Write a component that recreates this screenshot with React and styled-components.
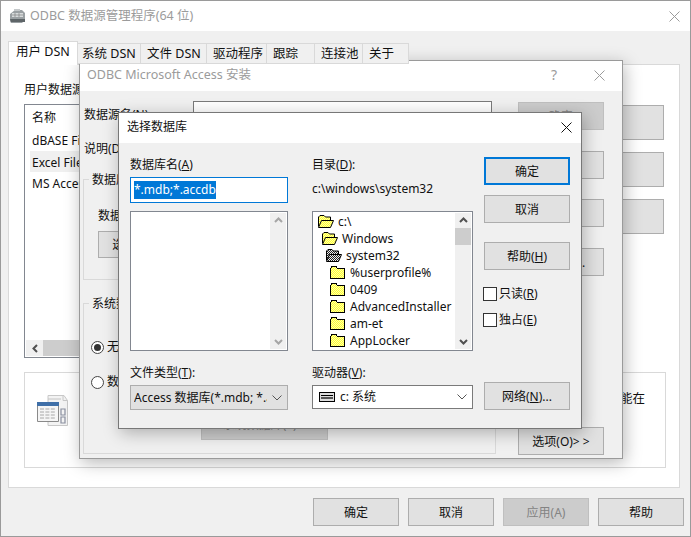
import React from "react";
import styled, { createGlobalStyle } from "styled-components";

const Global = createGlobalStyle`
  html, body { margin: 0; padding: 0; background: #fff; }
  body { font: 12px/16px "Noto Sans", "Noto Sans CJK SC", sans-serif; color: #111; overflow: hidden; }
  * { box-sizing: border-box; }
`;

const Desktop = styled.div`
  position: relative;
  width: 691px;
  height: 537px;
  overflow: hidden;
`;

const Win = styled.section`
  position: absolute;
  left: ${p => p.$x}px;
  top: ${p => p.$y}px;
  width: ${p => p.$w}px;
  height: ${p => p.$h}px;
  display: flex;
  flex-direction: column;
  background: #f0f0f0;
  border: 1px solid ${p => (p.$active ? "#777" : "#9a9a9a")};
  box-shadow: ${p => (p.$shadow ? "2px 4px 16px rgba(0,0,0,.28)" : "none")};
`;

const TitleBar = styled.header`
  flex: none;
  height: 30px;
  display: flex;
  align-items: center;
  gap: 4px;
  padding: 0 ${p => p.$pr || 16}px ${p => p.$pb || 0}px ${p => p.$pl}px;
  background: #fff;
  color: ${p => (p.$active ? "#111" : "#9b9b9b")};
  font-size: ${p => (p.$active ? 12 : 12.5)}px;
`;

const TitleText = styled.span`
  flex: 1;
  white-space: nowrap;
`;

const Help = styled.span`
  color: #9b9b9b;
  font-size: 14px;
  margin-right: 33px;
`;

const Close = ({ active }) => (
  <svg width="11" height="11" viewBox="0 0 11 11">
    <path d="M.5.5l10 10M10.5.5l-10 10" stroke={active ? "#111" : "#9b9b9b"} strokeWidth="1" fill="none" />
  </svg>
);

const U = styled.u`
  text-underline-offset: 1px;
`;

/* ---------- buttons ---------- */
const Btn = styled.button`
  flex: none;
  display: block;
  width: ${p => p.$w || 86}px;
  height: ${p => p.$h || 28}px;
  margin-top: ${p => p.$mt || 0}px;
  padding: 1px 0 0;
  font: inherit;
  white-space: nowrap;
  color: ${p => (p.$disabled ? "#838383" : "#111")};
  background: ${p => (p.$disabled ? "#cccccc" : "#e1e1e1")};
  border: ${p => (p.$focus ? "2px solid #0078d7" : p.$disabled ? "1px solid #bfbfbf" : "1px solid #adadad")};
`;

/* ---------- outer window ---------- */
const OuterBody = styled.div`
  flex: 1;
  display: flex;
  flex-direction: column;
  padding: 10px 6px 0 7px;
`;

const Tabs = styled.nav`
  display: flex;
  align-items: flex-end;
  height: 23px;
  position: relative;
  z-index: 1;
`;

const Tab = styled.div`
  width: ${p => p.$w}px;
  height: ${p => (p.$on ? 24 : 21)}px;
  margin-bottom: ${p => (p.$on ? -1 : 0)}px;
  padding-top: 2px;
  padding-left: ${p => p.$pl}px;
  font-size: 12.5px;
  background: ${p => (p.$on ? "#fff" : "#f0f0f0")};
  border: 1px solid #d9d9d9;
  border-bottom: ${p => (p.$on ? "none" : "1px solid #d9d9d9")};
  border-left: ${p => (p.$on ? "1px solid #d9d9d9" : "none")};
  white-space: nowrap;
`;

const Panel = styled.div`
  width: 672px;
  height: 424px;
  background: #fff;
  border: 1px solid #d9d9d9;
  padding: 17px 13px 0 15px;
`;

const PanelRow = styled.div`
  display: flex;
  justify-content: space-between;
  margin-top: 6px;
`;

const DsnList = styled.div`
  width: 470px;
  height: 254px;
  display: flex;
  flex-direction: column;
  border: 1px solid #828790;
  padding: 5px 1px 1px;
`;

const DsnHead = styled.div`
  height: 19px;
  padding-left: 6px;
`;

const DsnItem = styled.div`
  height: 21.5px;
  line-height: 23px;
  margin-left: 4px;
  padding-left: 2px;
  white-space: nowrap;
  background: ${p => (p.$sel ? "#f0f0f0" : "transparent")};
`;

const HScroll = styled.div`
  margin-top: auto;
  height: 16px;
  display: flex;
  align-items: center;
  background: #f0f0f0;
`;

const HArrow = styled.div`
  width: 17px;
  display: flex;
  justify-content: center;
`;

const HThumb = styled.div`
  width: 200px;
  height: 16px;
  background: #cdcdcd;
`;

const SideBtns = styled.div`
  display: flex;
  flex-direction: column;
  gap: 12px;
  padding: 1px 2px 0 0;
`;

const InfoBox = styled.div`
  height: 96px;
  margin-top: 14px;
  border: 1px solid #d9d9d9;
  display: flex;
  align-items: flex-start;
  padding: 17px 0 0 12px;
`;

const IconSlot = styled.div`
  margin-top: 5px;
  display: flex;
`;

const InfoText = styled.div`
  margin-left: 12px;
  width: 565px;
  padding-top: 1px;
`;

const InfoLine = styled.div`
  text-align: ${p => p.$align || "left"};
  white-space: nowrap;
  font-size: 12.5px;
`;

const Footer = styled.footer`
  display: flex;
  justify-content: flex-end;
  gap: 9px;
  margin-top: 10px;
`;

/* ---------- middle window ---------- */
const MidBody = styled.div`
  flex: 1;
  min-height: 0;
  display: flex;
  justify-content: space-between;
  padding: 10px 18px 2px 3px;
`;

const MidForm = styled.div`
  width: 413px;
  display: flex;
  flex-direction: column;
`;

const FieldRow = styled.div`
  display: flex;
  align-items: flex-start;
  height: 34px;
  padding-left: 1px;
`;

const FieldLabel = styled.label`
  width: 109px;
  padding-top: 6px;
  white-space: nowrap;
`;

const FieldInput = styled.div`
  width: 299px;
  height: 26px;
  background: #fff;
  border: 1px solid #7a7a7a;
`;

const Fieldset = styled.fieldset`
  margin: ${p => p.$mt || 0}px 0 0;
  padding: ${p => p.$pt}px 12px 0 14px;
  height: ${p => p.$h}px;
  border: 1px solid #d9d9d9;
  min-width: 0;
`;

const Legend = styled.legend`
  margin-left: -9px;
  padding: 2px 3px 0;
`;

const SmallBtns = styled.div`
  display: flex;
  gap: 10px;
  margin-top: 7px;
`;

const RadioRow = styled.label`
  display: flex;
  align-items: center;
  gap: 3px;
  height: 16px;
  margin-top: ${p => p.$mt}px;
  margin-left: -7px;
`;

const Radio = styled.span`
  width: 13px;
  height: 13px;
  flex: none;
  display: flex;
  align-items: center;
  justify-content: center;
  border-radius: 50%;
  background: #fff;
  border: 1px solid #444;
  &::after {
    content: "";
    width: 7px;
    height: 7px;
    border-radius: 50%;
    background: ${p => (p.$on ? "#333" : "transparent")};
  }
`;

const CenterBtn = styled.div`
  display: flex;
  justify-content: flex-start;
  margin: ${p => p.$mt}px 0 0 103px;
`;

const MidBtns = styled.div`
  display: flex;
  flex-direction: column;
  padding-top: 1px;
`;

/* ---------- front dialog ---------- */
const DlgBody = styled.div`
  flex: 1;
  display: flex;
  padding: 14px 0 0 11px;
`;

const Col = styled.div`
  width: ${p => p.$w}px;
  margin-right: ${p => p.$mr || 0}px;
  display: flex;
  flex-direction: column;
`;

const Label = styled.div`
  height: 16px;
  flex: none;
  margin-top: ${p => p.$mt || 0}px;
  white-space: nowrap;
`;

const NameInput = styled.div`
  height: 26px;
  margin-top: 4px;
  border: 1px solid #0078d7;
  background: #fff;
  padding: 3px 0 0 3px;
`;

const Selected = styled.span`
  display: inline-block;
  height: 18px;
  line-height: 18px;
  background: #0078d7;
  color: #fff;
  white-space: nowrap;
`;

const ListBox = styled.div`
  height: 140px;
  margin-top: ${p => p.$mt}px;
  display: flex;
  background: #fff;
  border: 1px solid #828790;
  padding: 1px;
`;

const ListMain = styled.div`
  flex: 1;
  min-width: 0;
  overflow: hidden;
`;

const VScroll = styled.div`
  flex: none;
  width: 16px;
  display: flex;
  flex-direction: column;
  align-items: center;
  background: #f0f0f0;
  padding: 4px 0;
`;

const VThumb = styled.div`
  width: 16px;
  height: 17px;
  margin-top: 5px;
  background: #cdcdcd;
`;

const VSpacer = styled.div`
  flex: 1;
`;

const TreeRow = styled.div`
  height: 17px;
  display: flex;
  align-items: center;
  gap: ${p => (p.$depth === 3 ? 5 : 4)}px;
  padding-left: ${p => 4 + p.$depth * 4}px;
  white-space: nowrap;
`;

const SelectBox = styled.div`
  height: ${p => p.$h}px;
  margin-top: 4px;
  display: flex;
  align-items: center;
  gap: 5px;
  padding: 0 5px 0 ${p => p.$pl}px;
  background: ${p => (p.$flat ? "#e1e1e1" : "#fff")};
  border: 1px solid ${p => (p.$flat ? "#adadad" : "#7a7a7a")};
  white-space: nowrap;
`;

const SelectText = styled.span`
  flex: 1;
  min-width: 0;
  overflow: hidden;
`;

const Check = styled.label`
  display: flex;
  align-items: center;
  gap: 2px;
  height: 14px;
  margin: ${p => p.$mt}px 0 0 -1px;
  white-space: nowrap;
`;

const Box = styled.span`
  width: 14px;
  height: 14px;
  flex: none;
  background: #fff;
  border: 1px solid #333;
`;

/* ---------- drawings ---------- */
const Chevron = ({ up, light }) => (
  <svg width="9" height="6" viewBox="0 0 9 6">
    <path d={up ? "M1 5l3.5-3.5L8 5" : "M1 1l3.5 3.5L8 1"} fill="none" stroke={light ? "#a6a6a6" : "#505050"} strokeWidth="2" />
  </svg>
);

const ChevronLeft = () => (
  <svg width="6" height="9" viewBox="0 0 6 9">
    <path d="M5 1L1.5 4.5 5 8" fill="none" stroke="#505050" strokeWidth="2" />
  </svg>
);

const ChevronThin = ({ color }) => (
  <svg width="10" height="6" viewBox="0 0 10 6">
    <path d="M.5.5L5 5 9.5.5" fill="none" stroke={color} strokeWidth="1" />
  </svg>
);

const Dither = ({ id, a, b }) => (
  <pattern id={id} width="2" height="2" patternUnits="userSpaceOnUse">
    <rect width="2" height="2" fill={a} />
    <rect width="1" height="1" fill={b} />
    <rect x="1" y="1" width="1" height="1" fill={b} />
  </pattern>
);

const ClosedFolder = () => (
  <svg width="15" height="13" viewBox="0 0 15 13" shapeRendering="crispEdges">
    <defs><Dither id="dy" a="#ffff33" b="#ffffa8" /></defs>
    <path d="M.5 12.5V2.5L2 .5h4l1.5 2h7v10z" fill="url(#dy)" stroke="#000" />
  </svg>
);

const OpenFolder = ({ dark }) => (
  <svg width="16" height="13" viewBox="0 0 16 13">
    <defs>
      <Dither id="dy2" a="#ffff33" b="#ffffa8" />
      <Dither id="dk" a="#222" b="#eee" />
    </defs>
    <path d="M.5 11.5V2L2 .5h4L7.5 2h5v3" fill={dark ? "url(#dk)" : "url(#dy2)"} stroke="#000" />
    <path d="M.5 12.5L3.5 5.5h12l-3 7z" fill={dark ? "url(#dk)" : "url(#dy2)"} stroke="#000" />
  </svg>
);

const DriveIcon = () => (
  <svg width="16" height="10" viewBox="0 0 16 10" shapeRendering="crispEdges">
    <rect x=".5" y=".5" width="15" height="9" fill="#ddd" stroke="#000" />
    <rect x="2" y="3" width="12" height="1" fill="#000" />
    <rect x="2" y="5" width="12" height="2" fill="#555" />
  </svg>
);

const AppIcon = () => (
  <svg width="17" height="16" viewBox="0 0 17 16">
    <path d="M1 6l5-4h7l3 3v7l-3 3H2l-1-2z" fill="#9aa0a3" />
    <path d="M3 5h11v4H3z" fill="#d8dcdd" />
    <path d="M3 7h11M6 5v4M10 5v4" stroke="#777" strokeWidth=".6" />
    <path d="M1 11h15v3H2z" fill="#5e6568" />
    <path d="M5 1h6v2H5z" fill="#c4c8ca" />
  </svg>
);

const DataIcon = () => (
  <svg width="31" height="32" viewBox="0 0 31 32">
    <path d="M11 .5h16l3.5 5v25H11z" fill="#f3f3f3" stroke="#c8c8c8" />
    <path d="M26 .5v5h4.5" fill="none" stroke="#c8c8c8" />
    <path d="M11 4h13" stroke="#c4c4c4" />
    <path d="M24 14h4v6h-4zM24 22h4v6h-4z" fill="none" stroke="#8a8fa0" strokeWidth="1.2" />
    <path d="M.5 7.5h21v19H.5z" fill="#f5f5f5" stroke="#8a8a8a" />
    <path d="M0 7h22v4H0z" fill="#3f6fa8" />
    <path d="M3 14h16M3 17h16M3 20h16M3 23h16" stroke="#a8a8a8" strokeDasharray="4 1.4" />
  </svg>
);

const folders = ["%userprofile%", "0409", "AdvancedInstaller", "am-et", "AppLocker"];

export default function App() {
  return (
    <Desktop>
      <Global />

      <Win $x={0} $y={0} $w={691} $h={537}>
        <TitleBar $pl={8} $pr={10}>
          <AppIcon />
          <TitleText>ODBC 数据源管理程序(64 位)</TitleText>
          <Close />
        </TitleBar>
        <OuterBody>
          <Tabs>
            <Tab $on $w={70} $pl={7}>用户 DSN</Tab>
            <Tab $w={63} $pl={4}>系统 DSN</Tab>
            <Tab $w={66} $pl={6}>文件 DSN</Tab>
            <Tab $w={60} $pl={6}>驱动程序</Tab>
            <Tab $w={48} $pl={6}>跟踪</Tab>
            <Tab $w={48} $pl={6}>连接池</Tab>
            <Tab $w={46} $pl={6}>关于</Tab>
          </Tabs>
          <Panel>
            <Label>用户数据源(U):</Label>
            <PanelRow>
              <DsnList>
                <DsnHead>名称</DsnHead>
                <DsnItem>dBASE Files</DsnItem>
                <DsnItem $sel>Excel Files</DsnItem>
                <DsnItem>MS Access Database</DsnItem>
                <HScroll>
                  <HArrow><ChevronLeft /></HArrow>
                  <HThumb />
                </HScroll>
              </DsnList>
              <SideBtns>
                <Btn $w={164} $h={35}>添加(D)...</Btn>
                <Btn $w={164} $h={35}>删除(R)</Btn>
                <Btn $w={164} $h={35}>配置(C)...</Btn>
              </SideBtns>
            </PanelRow>
            <InfoBox>
              <IconSlot><DataIcon /></IconSlot>
              <InfoText>
                <InfoLine $align="right">ODBC 用户数据源存储了如何与指定数据提供程序连接的信息。用户数据源只对您可见，而且只能在</InfoLine>
                <InfoLine>当前计算机上使用。</InfoLine>
              </InfoText>
            </InfoBox>
          </Panel>
          <Footer>
            <Btn>确定</Btn>
            <Btn>取消</Btn>
            <Btn $disabled>应用(A)</Btn>
            <Btn>帮助</Btn>
          </Footer>
        </OuterBody>
      </Win>

      <Win $x={79} $y={60} $w={544} $h={399} $shadow>
        <TitleBar $pl={7} $pr={17} $pb={2}>
          <TitleText>ODBC Microsoft Access 安装</TitleText>
          <Help>?</Help>
          <Close />
        </TitleBar>
        <MidBody>
          <MidForm>
            <FieldRow>
              <FieldLabel>数据源名(N):</FieldLabel>
              <FieldInput />
            </FieldRow>
            <FieldRow>
              <FieldLabel>说明(D):</FieldLabel>
              <FieldInput />
            </FieldRow>
            <Fieldset $h={110} $pt={20} $mt={1}>
              <Legend>数据库</Legend>
              <Label>数据库:</Label>
              <SmallBtns>
                <Btn $w={76} $h={27}>选择(S)...</Btn>
                <Btn $w={76} $h={27}>创建(C)...</Btn>
                <Btn $w={76} $h={27}>修复(R)...</Btn>
                <Btn $w={76} $h={27}>压缩(M)...</Btn>
              </SmallBtns>
            </Fieldset>
            <Fieldset $h={160} $pt={0} $mt={14}>
              <Legend>系统数据库</Legend>
              <RadioRow $mt={27}><Radio $on /><span>无(E)</span></RadioRow>
              <RadioRow $mt={19}><Radio /><span>数据库(T):</span></RadioRow>
              <CenterBtn $mt={19}><Btn $disabled $w={127} $h={31}>系统数据库(Y)...</Btn></CenterBtn>
            </Fieldset>
          </MidForm>
          <MidBtns>
            <Btn $disabled>确定</Btn>
            <Btn $mt={21}>取消</Btn>
            <Btn $mt={20}>帮助(H)</Btn>
            <Btn $mt={21}>高级(A)...</Btn>
            <Btn $mt={151}>选项(O)&gt; &gt;</Btn>
          </MidBtns>
        </MidBody>
      </Win>

      <Win $x={118} $y={112} $w={464} $h={317} $shadow $active>
        <TitleBar $pl={8} $pr={9} $pb={2} $active>
          <TitleText>选择数据库</TitleText>
          <Close active />
        </TitleBar>
        <DlgBody>
          <Col $w={158} $mr={24}>
            <Label>数据库名(<U>A</U>)</Label>
            <NameInput><Selected>*.mdb;*.accdb</Selected></NameInput>
            <ListBox $mt={8}>
              <ListMain />
              <VScroll>
                <Chevron up light />
                <VSpacer />
                <Chevron light />
              </VScroll>
            </ListBox>
            <Label $mt={14}>文件类型(<U>T</U>):</Label>
            <SelectBox $h={25} $flat $pl={3}>
              <SelectText>Access 数据库(*.mdb; *.accdb)</SelectText>
              <ChevronThin color="#555" />
            </SelectBox>
          </Col>
          <Col $w={161} $mr={11}>
            <Label>目录(<U>D</U>):</Label>
            <Label $mt={8}>c:\windows\system32</Label>
            <ListBox $mt={14}>
              <ListMain>
                <TreeRow $depth={0}><OpenFolder /><span>c:\</span></TreeRow>
                <TreeRow $depth={1}><OpenFolder /><span>Windows</span></TreeRow>
                <TreeRow $depth={2}><OpenFolder dark /><span>system32</span></TreeRow>
                {folders.map(f => (
                  <TreeRow key={f} $depth={3}><ClosedFolder /><span>{f}</span></TreeRow>
                ))}
              </ListMain>
              <VScroll>
                <Chevron up />
                <VThumb />
                <VSpacer />
                <Chevron />
              </VScroll>
            </ListBox>
            <Label $mt={14}>驱动器(<U>V</U>):</Label>
            <SelectBox $h={24} $pl={6}>
              <DriveIcon />
              <SelectText>c: 系统</SelectText>
              <ChevronThin color="#555" />
            </SelectBox>
          </Col>
          <Col $w={86}>
            <Btn $focus>确定</Btn>
            <Btn $mt={10}>取消</Btn>
            <Btn $mt={19}>帮助(<U>H</U>)</Btn>
            <Check $mt={17}><Box /><span>只读(<U>R</U>)</span></Check>
            <Check $mt={12}><Box /><span>独占(<U>E</U>)</span></Check>
            <Btn $mt={55}>网络(<U>N</U>)...</Btn>
          </Col>
        </DlgBody>
      </Win>
    </Desktop>
  );
}
